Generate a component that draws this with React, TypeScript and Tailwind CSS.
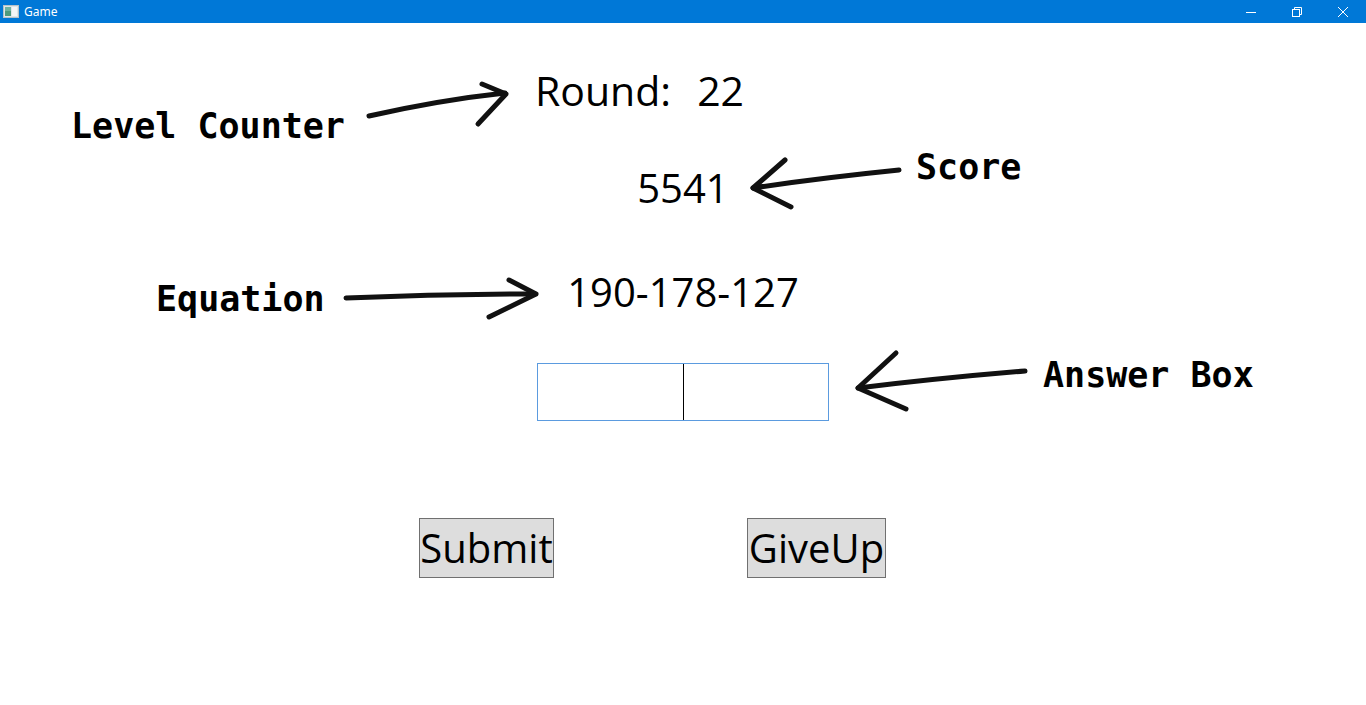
import React from "react";

const sans = { fontFamily: '"Open Sans", "Noto Sans", sans-serif' };
const mono = { fontFamily: '"DejaVu Sans Mono", monospace' };

function TitleBar() {
  return (
    <div className="flex h-[23px] items-center bg-[#0078d7] text-white">
      <svg width="16" height="13" viewBox="0 0 16 13" className="ml-[3px] mr-[5px]">
        <rect x="0.5" y="0.5" width="15" height="12" fill="#dfe6e9" stroke="#b7c3c8" />
        <rect x="2" y="2" width="6" height="9" fill="#4d9a7c" />
        <rect x="2" y="2" width="6" height="4" fill="#6fb3a0" />
        <rect x="9" y="2" width="5" height="9" fill="#f4f6f7" />
      </svg>
      <span className="text-[12px]" style={{ fontFamily: '"Noto Sans", sans-serif' }}>Game</span>
      <div className="ml-auto flex h-full">
        <div className="flex h-full w-[46px] items-center justify-center">
          <svg width="10" height="10" viewBox="0 0 10 10">
            <line x1="0" y1="5.5" x2="10" y2="5.5" stroke="white" strokeWidth="1" />
          </svg>
        </div>
        <div className="flex h-full w-[46px] items-center justify-center">
          <svg width="10" height="10" viewBox="0 0 10 10">
            <rect x="0.5" y="2.5" width="7" height="7" fill="none" stroke="white" strokeWidth="1" />
            <path d="M2.5 2.5 V0.5 H9.5 V7.5 H7.5" fill="none" stroke="white" strokeWidth="1" />
          </svg>
        </div>
        <div className="flex h-full w-[46px] items-center justify-center">
          <svg width="10" height="10" viewBox="0 0 10 10">
            <path d="M0 0 L10 10 M10 0 L0 10" stroke="white" strokeWidth="1" />
          </svg>
        </div>
      </div>
    </div>
  );
}

function Annotations() {
  const s = { stroke: "#111", strokeWidth: 5, strokeLinecap: "round" as const, fill: "none" };
  return (
    <div className="pointer-events-none absolute inset-0">
      <svg width="1366" height="705" className="absolute left-0 top-0">
        <path d="M369 116 Q440 100 505 93" {...s} />
        <path d="M482 84 L506 94 L478 124" {...s} strokeLinejoin="round" />
        <path d="M899 170 Q820 178 753 188" {...s} />
        <path d="M785 160 L753 188 L791 207" {...s} strokeLinejoin="round" />
        <path d="M346 298 Q440 294 535 294" {...s} />
        <path d="M509 280 L536 294 L489 317" {...s} strokeLinejoin="round" />
        <path d="M1025 371 Q940 378 858 388" {...s} />
        <path d="M896 353 L858 388 L906 409" {...s} strokeLinejoin="round" />
      </svg>
      <div className="absolute left-[71px] top-[109px] text-[35px] font-bold leading-[35px] text-black whitespace-pre" style={mono}>Level Counter</div>
      <div className="absolute left-[916px] top-[150px] text-[35px] font-bold leading-[35px] text-black whitespace-pre" style={mono}>Score</div>
      <div className="absolute left-[156px] top-[282px] text-[35px] font-bold leading-[35px] text-black whitespace-pre" style={mono}>Equation</div>
      <div className="absolute left-[1043px] top-[358px] text-[35px] font-bold leading-[35px] text-black whitespace-pre" style={mono}>Answer Box</div>
    </div>
  );
}

export default function App() {
  return (
    <div className="relative h-[705px] w-[1366px] overflow-hidden bg-white" style={sans}>
      <TitleBar />
      <div className="flex flex-col text-black">
        <div className="mt-[42px] flex h-[50px] items-center pl-[535px] text-[41px] leading-[50px]">
          <span>Round:</span>
          <span className="ml-[26px]">22</span>
        </div>
        <div className="mt-[48px] flex h-[50px] items-center justify-center text-[40px] leading-[50px]">
          5541
        </div>
        <div className="mt-[54px] flex h-[50px] items-center justify-center text-[40px] leading-[50px]">
          190-178-127
        </div>
        <div className="mt-[46px] flex justify-center">
          <div className="relative flex h-[58px] w-[292px] items-center justify-center border border-[#5b9bdf] bg-white">
            <div className="h-[56px] w-px bg-black" />
          </div>
        </div>
        <div className="mt-[97px] flex pl-[419px]">
          <button className="flex h-[60px] w-[135px] items-center justify-center border border-[#707070] bg-[#dddddd] text-[40px] leading-none" style={sans}>
            Submit
          </button>
          <button className="ml-[193px] flex h-[60px] w-[139px] items-center justify-center border border-[#707070] bg-[#dddddd] text-[40px] leading-none" style={sans}>
            GiveUp
          </button>
        </div>
      </div>
      <Annotations />
    </div>
  );
}
